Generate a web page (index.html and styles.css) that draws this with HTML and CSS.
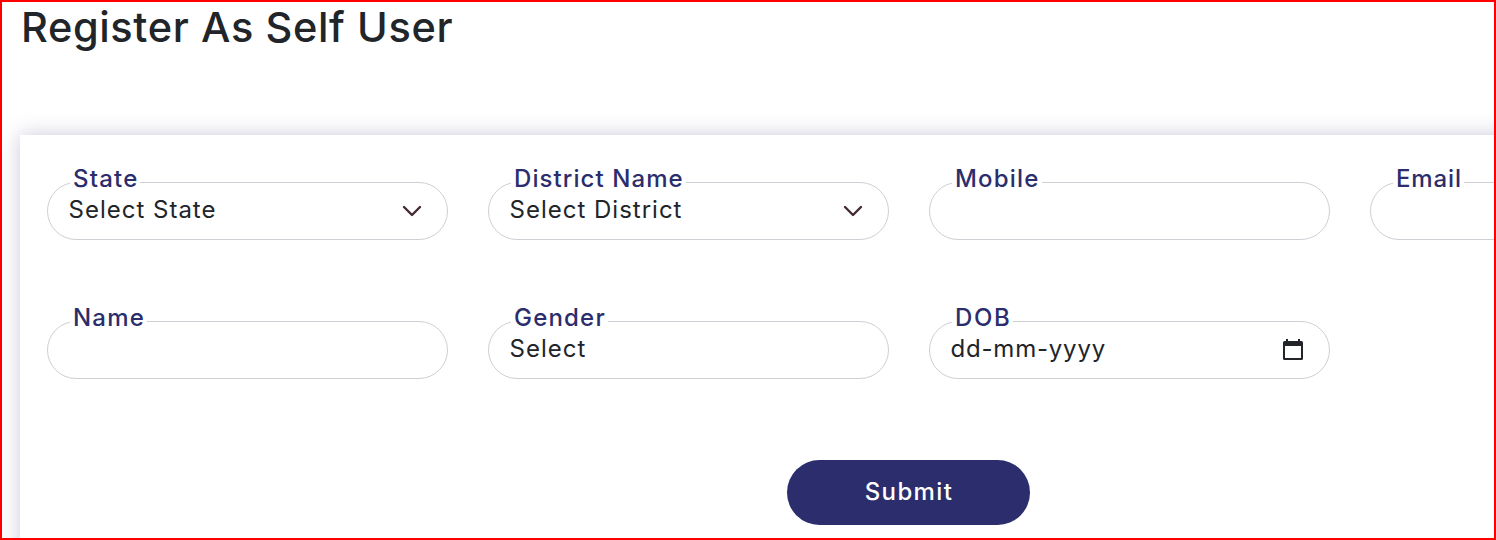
FILE: index.html
```
<!DOCTYPE html>
<html lang="en">
<head>
    <meta charset="UTF-8">
    <meta name="viewport" content="width=device-width, initial-scale=1.0">
    <title>Register As Self User</title>
    <link rel="stylesheet" href="styles.css">
</head>
<body>
    <main class="page">
        <h1 class="title">Register As Self User</h1>
        <form class="card">
            <div class="fields">
                <div class="field">
                    <label class="state-label" for="state">State</label>
                    <select class="control" id="state">
                        <option>Select State</option>
                    </select>
                    <svg class="chevron" viewBox="0 0 20 12"><path d="M2 2l8 8 8-8"/></svg>
                </div>
                <div class="field">
                    <label class="district-label" for="district">District Name</label>
                    <select class="control" id="district">
                        <option>Select District</option>
                    </select>
                    <svg class="chevron" viewBox="0 0 20 12"><path d="M2 2l8 8 8-8"/></svg>
                </div>
                <div class="field">
                    <label class="mobile-label" for="mobile">Mobile</label>
                    <input class="control" type="text" id="mobile">
                </div>
                <div class="field">
                    <label class="email-label" for="email">Email</label>
                    <input class="control" type="text" id="email">
                </div>
                <div class="field">
                    <label class="name-label" for="name">Name</label>
                    <input class="control" type="text" id="name">
                </div>
                <div class="field">
                    <label class="gender-label" for="gender">Gender</label>
                    <select class="control" id="gender">
                        <option>Select</option>
                    </select>
                </div>
                <div class="field">
                    <label class="dob-label" for="dob">DOB</label>
                    <input class="control dob-input" type="text" id="dob" placeholder="dd-mm-yyyy">
                    <svg class="calendar" viewBox="0 0 20 21"><path d="M3 0h2v2h10V0h2v2h1.500a1.500 1.500 0 0 1 1.500 1.500V19.500a1.500 1.500 0 0 1-1.500 1.500H1.500A1.500 1.500 0 0 1 0 19.500V3.500A1.500 1.500 0 0 1 1.500 2H3zM2 7v12h16V7z" fill-rule="evenodd"/></svg>
                </div>
            </div>
            <button type="button" class="submit">Submit</button>
        </form>
    </main>
</body>
</html>
```
FILE: styles.css
```
* {
    box-sizing: border-box;
}
body {
    margin: 0;
    font-family: Inter, "Liberation Sans", sans-serif;
    background-color: #fff;
    overflow: hidden;
}
.page {
    height: 540px;
    padding: 0 0 0 18px;
    border: 2px solid #f00;
    overflow: hidden;
}
.title {
    margin: 0 0 83px;
    padding-left: 1px;
    font-size: 41.5px;
    line-height: 50px;
    font-weight: 500;
    letter-spacing: 0.62px;
    color: #212529;
}
.card {
    display: flex;
    flex-direction: column;
    align-items: center;
    width: 1777px;
    height: 480px;
    padding: 47px 26px 0 27px;
    background-color: #fff;
    box-shadow: 0 0 20px rgba(43, 45, 109, 0.25);
}
.fields {
    display: grid;
    grid-template-columns: repeat(4, 401px);
    gap: 81px 40px;
}
.field {
    position: relative;
    height: 58px;
}
.field label {
    position: absolute;
    top: -18px;
    left: 23px;
    padding: 0 2px 0 3px;
    font-size: 24px;
    line-height: 29px;
    font-weight: 500;
    letter-spacing: 1.2px;
    white-space: nowrap;
    color: #2b2d6d;
    background-color: #fff;
}
.field .district-label {
    letter-spacing: 1.08px;
}
.field .email-label {
    letter-spacing: 0.9px;
}
.field .dob-label {
    padding-right: 1px;
    letter-spacing: 1.7px;
}
.control {
    display: block;
    width: 100%;
    height: 58px;
    padding: 0 22px 3px 20.5px;
    font-family: inherit;
    font-size: 24px;
    font-weight: 400;
    letter-spacing: 1px;
    color: #212529;
    background-color: #fff;
    border: 1px solid #cfcfd6;
    border-radius: 29px;
    appearance: none;
    outline: none;
}
.dob-input {
    letter-spacing: 0.8px;
}
.control::placeholder {
    color: #212529;
    opacity: 1;
}
.chevron {
    position: absolute;
    top: 23px;
    right: 26px;
    width: 20px;
    height: 12px;
    fill: none;
    stroke: #432b30;
    stroke-width: 2.4;
    stroke-linecap: round;
    stroke-linejoin: round;
}
.calendar {
    position: absolute;
    top: 18px;
    right: 27px;
    width: 20px;
    height: 21px;
    fill: #212529;
}
.submit {
    width: 243px;
    height: 65px;
    margin: 81px 1px 0 0;
    padding: 0 0 2px 1px;
    font-family: inherit;
    font-size: 24px;
    font-weight: 500;
    letter-spacing: 1.4px;
    color: #fff;
    background-color: #2b2d6d;
    border: none;
    border-radius: 33px;
    cursor: pointer;
}
```
